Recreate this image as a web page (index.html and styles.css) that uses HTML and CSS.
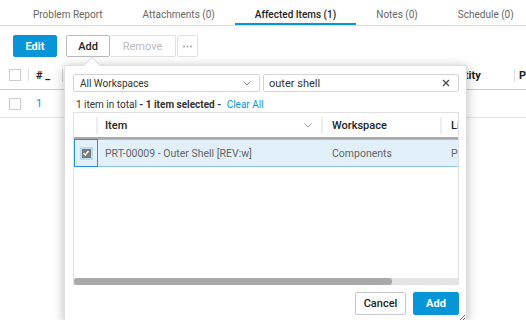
FILE: index.html
```html
<!DOCTYPE html>
<html lang="en">
<head>
    <meta charset="UTF-8">
    <meta name="viewport" content="width=device-width, initial-scale=1.0">
    <title>Affected Items</title>
    <link rel="stylesheet" href="styles.css">
</head>
<body>
    <div class="tabs">
        <div class="tab">Problem Report</div>
        <div class="tab">Attachments (0)</div>
        <div class="tab tab-active">Affected Items (1)</div>
        <div class="tab">Notes (0)</div>
        <div class="tab">Schedule (0)</div>
    </div>

    <div class="toolbar">
        <button class="btn btn-primary btn-edit">Edit</button>
        <div class="btn-group">
            <button class="btn btn-add">Add</button>
            <button class="btn btn-remove" disabled>Remove</button>
        </div>
        <button class="btn btn-more">
            <svg width="9" height="3" viewBox="0 0 9 3"><circle cx="1" cy="1.5" r="0.9" fill="#999"/><circle cx="4.5" cy="1.5" r="0.9" fill="#999"/><circle cx="8" cy="1.5" r="0.9" fill="#999"/></svg>
        </button>
    </div>

    <div class="table">
        <div class="table-row table-head">
            <div class="cell cell-check"><span class="box"></span></div>
            <div class="cell cell-num">#&nbsp;_</div>
            <div class="cell cell-fill"></div>
            <div class="cell cell-qty">Quantity</div>
            <div class="cell cell-last">P</div>
        </div>
        <div class="table-row">
            <div class="cell cell-check"><span class="box"></span></div>
            <div class="cell cell-num link">1</div>
            <div class="cell cell-fill"></div>
        </div>
    </div>

    <div class="popup">
        <div class="popup-arrow"></div>
        <div class="filters">
            <div class="select">
                <span>All Workspaces</span>
                <svg class="chevron" width="8" height="5" viewBox="0 0 8 5"><path d="M0.5 0.5 L4 4 L7.5 0.5" fill="none" stroke="#888" stroke-width="1"/></svg>
            </div>
            <div class="search">
                <span>outer shell</span>
                <svg class="clear" width="8" height="8" viewBox="0 0 8 8"><path d="M1 1 L7 7 M7 1 L1 7" stroke="#444" stroke-width="1.2"/></svg>
            </div>
        </div>
        <div class="summary">1 item in total <b>- 1 item selected -</b> <a class="clear-all">Clear All</a></div>

        <div class="grid">
            <div class="grid-head">
                <div class="gcell gcell-check"></div>
                <div class="gcell gcell-item">Item
                    <svg class="chevron" width="8" height="5" viewBox="0 0 8 5"><path d="M0.5 0.5 L4 4 L7.5 0.5" fill="none" stroke="#999" stroke-width="1"/></svg>
                </div>
                <div class="gcell gcell-ws">Workspace</div>
                <div class="gcell gcell-lc">Lifecycle</div>
            </div>
            <div class="grid-row selected">
                <div class="gcell gcell-check">
                    <span class="checked">
                        <svg width="8" height="8" viewBox="0 0 8 8"><path d="M1.5 4.2 L3.3 6 L6.5 2" fill="none" stroke="#fff" stroke-width="1.4"/></svg>
                    </span>
                </div>
                <div class="gcell gcell-item">PRT-00009 - Outer Shell [REV:w]</div>
                <div class="gcell gcell-ws">Components</div>
                <div class="gcell gcell-lc">Production</div>
            </div>
            <div class="grid-body"></div>
            <div class="scrollbar"><div class="thumb"></div></div>
        </div>

        <div class="popup-footer">
            <button class="btn btn-cancel">Cancel</button>
            <button class="btn btn-primary btn-confirm">Add</button>
        </div>
        <svg class="resize" width="7" height="7" viewBox="0 0 7 7"><path d="M6 1 L1 6 M6 4 L4 6" stroke="#777" stroke-width="1"/></svg>
    </div>
</body>
</html>
```

FILE: styles.css
```css
:root {
    --blue: #0696d7;
    --text: #3c3c3c;
    --muted: #666;
    --line: #d9d9d9;
}

* {
    margin: 0;
    padding: 0;
    box-sizing: border-box;
}

body {
    font-family: Roboto, "Liberation Sans", sans-serif;
    font-size: 11px;
    color: var(--text);
    background: #fff;
    width: 526px;
    height: 320px;
    overflow: hidden;
    position: relative;
}

/* tabs */
.tabs {
    display: flex;
    padding-left: 13px;
    height: 26px;
    border-bottom: 1px solid #ddd;
}

.tab {
    padding: 6px 20px 0;
    line-height: 18px;
    font-size: 10px;
    color: #666;
    white-space: nowrap;
}

.tab-active {
    color: #222;
    font-weight: 500;
    border-bottom: 2px solid var(--blue);
}

/* toolbar */
.toolbar {
    display: flex;
    align-items: center;
    padding: 9px 0 0 13px;
    height: 31px;
}

.btn {
    font-family: inherit;
    font-size: 11px;
    height: 22px;
    border: 1px solid #ccc;
    background: #fff;
    border-radius: 2px;
    color: #222;
    cursor: pointer;
}

.btn-primary {
    background: var(--blue);
    border-color: var(--blue);
    color: #fff;
    font-weight: 700;
}

.btn-edit {
    width: 44px;
    margin-right: 9px;
}

.btn-group {
    display: flex;
}

.btn-add {
    width: 44px;
    border-color: #bbb;
    font-weight: 500;
}

.btn-remove {
    width: 66px;
    color: #bbb;
    border-color: #e2e2e2;
    border-left: none;
}

.btn-more {
    width: 21px;
    margin-left: 1px;
    border-color: #e2e2e2;
    display: flex;
    align-items: center;
    justify-content: center;
}

/* background table */
.table {
    margin-top: 4px;
}

.table-row {
    display: flex;
    align-items: center;
    height: 28px;
    border-bottom: 1px solid #e6e6e6;
}

.table-head {
    height: 29px;
    border-bottom-color: #ccc;
    font-weight: 700;
    color: #222;
}

.cell {
    padding: 0 7px;
    white-space: nowrap;
}

.cell-check {
    width: 29px;
    padding-left: 9px;
}

.box {
    display: block;
    width: 12px;
    height: 12px;
    border: 1px solid #ccc;
    background: #fff;
}

.table-head .cell-check,
.table-head .cell-num,
.table-head .cell-qty {
    border-right: 1px solid #ddd;
}

.cell-num {
    width: 34px;
}

.link {
    color: var(--blue);
    font-weight: 400;
}

.cell-fill {
    flex: 1;
}

.cell-qty {
    width: 80px;
    padding-left: 4px;
}

.cell-last {
    width: 11px;
    padding: 0 0 0 4px;
}

/* popup */
.popup {
    position: absolute;
    left: 64px;
    top: 65px;
    width: 403px;
    height: 257px;
    background: #fff;
    border: 1px solid #ddd;
    border-radius: 2px;
    box-shadow: 0 2px 12px rgba(0, 0, 0, 0.28);
    padding: 8px 7px 0 8px;
    display: flex;
    flex-direction: column;
}

.popup-arrow {
    position: absolute;
    left: 21px;
    top: -7px;
    width: 12px;
    height: 12px;
    background: #fff;
    transform: rotate(45deg);
    border-left: 1px solid #ddd;
    border-top: 1px solid #ddd;
}

.filters {
    display: flex;
    gap: 3px;
    position: relative;
}

.select,
.search {
    display: flex;
    align-items: center;
    justify-content: space-between;
    height: 18px;
    border: 1px solid #d4d4d4;
    border-radius: 2px;
    padding: 0 8px 0 6px;
    color: #333;
}

.select {
    width: 187px;
    font-size: 10px;
}

.search {
    flex: 1;
    padding-left: 5px;
}

.summary {
    margin-top: 6px;
    height: 14px;
    line-height: 14px;
    font-size: 10px;
    color: #333;
    padding-left: 3px;
}

.summary b {
    font-weight: 700;
}

.clear-all {
    color: var(--blue);
    margin-left: 3px;
}

/* grid */
.grid {
    height: 173px;
    border-left: 1px solid #e2e2e2;
    border-right: 1px solid #e2e2e2;
    display: flex;
    flex-direction: column;
    overflow: hidden;
}

.grid-head,
.grid-row {
    display: flex;
    align-items: center;
    flex-shrink: 0;
}

.grid-head {
    height: 27px;
    border-top: 1px solid #e2e2e2;
    border-bottom: 2px solid #aaa;
    color: #222;
    font-weight: 500;
}

.gcell {
    height: 100%;
    display: flex;
    align-items: center;
    padding: 0 7px;
    white-space: nowrap;
    overflow: hidden;
    flex-shrink: 0;
}

.grid-head .gcell {
    border-right: 2px solid #eee;
    height: 17px;
}

.gcell-check {
    width: 24px;
    padding: 0;
    justify-content: center;
}

.gcell-item {
    width: 225px;
    justify-content: space-between;
    padding-right: 9px;
}

.gcell-ws {
    width: 119px;
    padding-left: 9px;
}

.gcell-lc {
    width: 60px;
    padding-left: 9px;
}

.grid-row {
    height: 28px;
    color: #666;
    font-size: 10.5px;
}

.selected {
    background: #e1f0fa;
    border-top: 1px solid #8cc4e6;
    border-bottom: 1px solid #8cc4e6;
}

.selected .gcell-check {
    border: 1px solid #2493d2;
    margin-top: -1px;
    height: 28px;
    margin-bottom: -1px;
}

.checked {
    display: flex;
    align-items: center;
    justify-content: center;
    width: 13px;
    height: 13px;
    background: #7b7b7b;
    border: 2px solid #b5dcf3;
}

.grid-body {
    flex: 1;
}

.scrollbar {
    height: 7px;
    flex-shrink: 0;
    background: #e4e4e4;
}

.thumb {
    width: 318px;
    height: 7px;
    background: #a9a9a9;
    border-radius: 3px;
}

.popup-footer {
    display: flex;
    justify-content: flex-end;
    gap: 7px;
    margin-top: 7px;
}

.btn-cancel {
    width: 51px;
    height: 23px;
    border-color: #c8c8c8;
    font-weight: 500;
}

.btn-confirm {
    width: 46px;
    height: 23px;
}

.resize {
    position: absolute;
    right: 0;
    bottom: 0;
}
```
